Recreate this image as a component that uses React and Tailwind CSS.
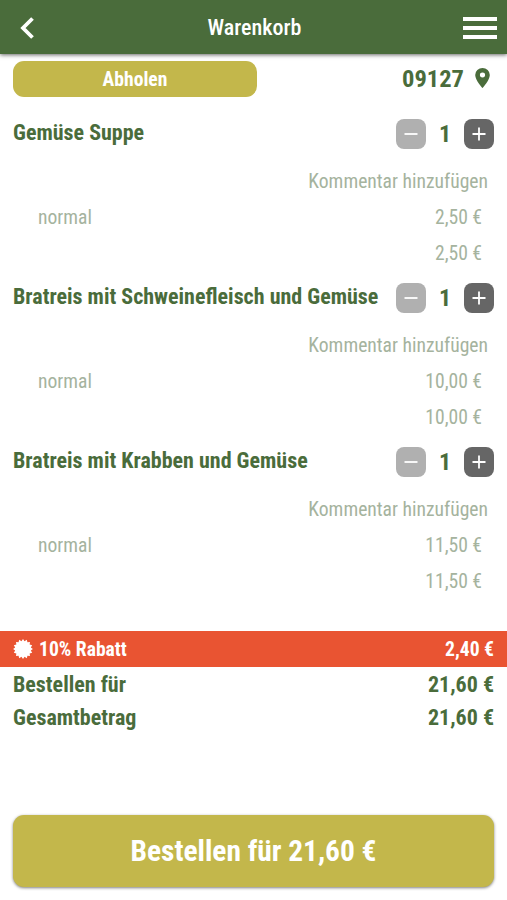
import { useState } from 'react';

const dishes = [
  { id: 1, name: 'Gemüse Suppe', variant: 'normal', price: '2,50 €', total: '2,50 €' },
  { id: 2, name: 'Bratreis mit Schweinefleisch und Gemüse', variant: 'normal', price: '10,00 €', total: '10,00 €' },
  { id: 3, name: 'Bratreis mit Krabben und Gemüse', variant: 'normal', price: '11,50 €', total: '11,50 €' },
];

// 16 shallow teeth around the discount badge
const badgePoints = Array.from({ length: 32 }, (_, i) => {
  const radius = i % 2 === 0 ? 9.9 : 8;
  const angle = (i * Math.PI) / 16;
  return `${(10 + radius * Math.sin(angle)).toFixed(2)},${(10 - radius * Math.cos(angle)).toFixed(2)}`;
}).join(' ');

const Header = () => (
  <header className="h-[54px] bg-[#4a6c3b] shadow-[0_1px_4px_rgba(0,0,0,0.6)] flex items-center justify-between pl-[20px] pr-[10px] text-white">
    <button type="button" aria-label="Zurück" className="w-[26px] pt-[2px]">
      <svg width="14" height="22" viewBox="0 0 14 22" fill="none" stroke="currentColor" strokeWidth="3.8">
        <path d="M12.500 1.500 3 11l9.500 9.500" />
      </svg>
    </button>
    <h1 className="text-[22px] leading-none pt-[2px] font-medium">Warenkorb</h1>
    <button type="button" aria-label="Menü" className="pt-[2px]">
      <svg width="34" height="24" viewBox="0 0 34 24" fill="currentColor" className="block">
        <path d="M0 1h34v4H0zM0 10h34v4H0zM0 19h34v4H0z" />
      </svg>
    </button>
  </header>
);

const CartItem = ({ dish }) => {
  const [count, setCount] = useState(1);

  return (
    <li className="h-[164px]">
      <div className="flex items-start justify-between pl-[13px] pr-[13px] h-[45px]">
        <h2 className="text-[22px] leading-[27px] font-bold text-[#4a6c3b] whitespace-nowrap">{dish.name}</h2>
        <div className="flex items-center w-[98px] justify-between text-white">
          <button
            type="button"
            aria-label="Weniger"
            onClick={() => setCount(Math.max(1, count - 1))}
            className="size-[30px] rounded-[8px] bg-[#b0b0b0] flex items-center justify-center"
          >
            <svg width="14" height="14" viewBox="0 0 14 14" stroke="currentColor" strokeWidth="1.8">
              <path d="M0.5 7h13" />
            </svg>
          </button>
          <span className="text-[24px] leading-[30px] font-bold text-[#4a6c3b]">{count}</span>
          <button
            type="button"
            aria-label="Mehr"
            onClick={() => setCount(count + 1)}
            className="size-[30px] rounded-[8px] bg-[#666] flex items-center justify-center"
          >
            <svg width="14" height="14" viewBox="0 0 14 14" stroke="currentColor" strokeWidth="1.8">
              <path d="M0.5 7h13M7 0.5v13" />
            </svg>
          </button>
        </div>
      </div>
      <div className="text-[19.6px] leading-[36px] text-[#a5b39e]">
        <p className="text-right pr-[19px]">Kommentar hinzufügen</p>
        <div className="flex justify-between pl-[38px] pr-[25px]">
          <span>{dish.variant}</span>
          <span>{dish.price}</span>
        </div>
        <p className="text-right pr-[25px]">{dish.total}</p>
      </div>
    </li>
  );
};

const App = () => {
  return (
    <div className="h-[900px] bg-white overflow-hidden font-['Roboto_Condensed','Roboto',sans-serif] font-stretch-condensed">
      <Header />

      {/* Pickup and postcode */}
      <div className="flex items-center justify-between pl-[13px] pr-[17px] pt-[7px]">
        <button type="button" className="w-[244px] h-[36px] rounded-[11px] bg-[#c3b74b] text-white text-[19.6px] font-bold pt-[2px]">
          Abholen
        </button>
        <div className="flex items-center text-[#4a6c3b]">
          <span className="text-[24.5px] leading-none font-bold">09127</span>
          <svg width="15" height="20" viewBox="0 0 15 21" preserveAspectRatio="none" fill="currentColor" className="ml-[11px] mb-[2px]">
            <path fillRule="evenodd" d="M7.500 0A7.300 7.300 0 0 0 .2 7.300C.2 12.800 7.500 21 7.500 21s7.300-8.200 7.300-13.700A7.300 7.300 0 0 0 7.500 0Zm0 9.900a2.600 2.600 0 1 1 0-5.200 2.600 2.600 0 0 1 0 5.200Z" />
          </svg>
        </div>
      </div>

      {/* Cart */}
      <ul className="mt-[22px]">
        {dishes.map((dish) => (
          <CartItem key={dish.id} dish={dish} />
        ))}
      </ul>

      {/* Discount */}
      <div className="mt-[20px] h-[36px] bg-[#e95432] text-white text-[19.6px] font-bold flex items-center justify-between px-[13px] pt-[2px]">
        <span className="flex items-center">
          <svg width="20" height="20" viewBox="0 0 20 20" fill="currentColor" className="mr-[6px] mb-[2px]">
            <polygon points={badgePoints} />
          </svg>
          10% Rabatt
        </span>
        <span>2,40 €</span>
      </div>

      {/* Totals */}
      <div className="px-[13px] pt-px text-[22px] leading-[33px] font-bold text-[#4a6c3b]">
        <div className="flex justify-between">
          <span>Bestellen für</span>
          <span>21,60 €</span>
        </div>
        <div className="flex justify-between">
          <span>Gesamtbetrag</span>
          <span>21,60 €</span>
        </div>
      </div>

      <div className="px-[13px] mt-[81px]">
        <button
          type="button"
          className="w-full h-[72px] rounded-[11px] bg-[#c3b74b] shadow-[0_1px_3px_rgba(0,0,0,0.5)] text-white text-[29.4px] font-bold pt-px"
        >
          Bestellen für 21,60 €
        </button>
      </div>
    </div>
  );
};

export default App;
